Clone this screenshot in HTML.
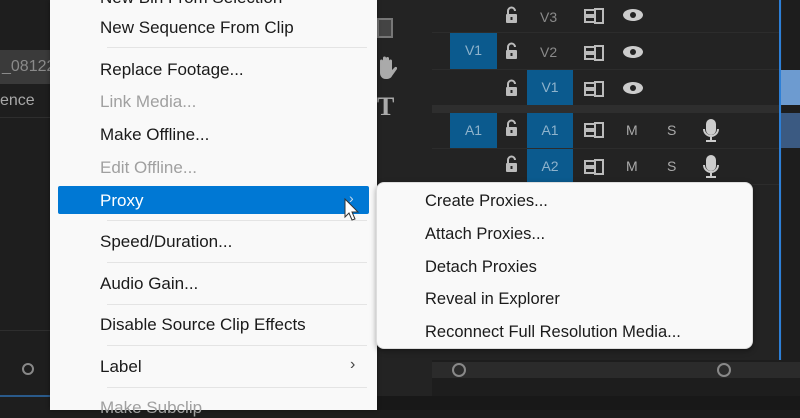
<!DOCTYPE html>
<html><head><style>
*{margin:0;padding:0;box-sizing:border-box}
body{width:800px;height:410px;overflow:hidden;background:#1d1d1d;font-family:"Liberation Sans",sans-serif;position:relative}
.a{position:absolute}
.menu{background:#f9f9f9}
.mi{position:absolute;left:100px;font-size:17px;color:#1a1a1a;white-space:nowrap;line-height:20px}
.dis{color:#a0a0a0}
.sep{position:absolute;left:107px;width:260px;height:1px;background:#e4e4e4}
.si{position:absolute;left:425px;font-size:16.5px;color:#1a1a1a;line-height:20px;white-space:nowrap}
.blue{background:#0b5a8e;color:#8fb3cc;font-size:14px;text-align:center;line-height:35px}
.lbl{color:#8a8a8a;font-size:14px}
</style></head><body>
<div class="a" style="left:0;top:0;width:50px;height:410px;background:#1e1e1e"></div>
<div class="a" style="left:0;top:50px;width:50px;height:34px;background:#3a3a3a"></div>
<div class="a" style="left:2px;top:58px;color:#8a8a8a;font-size:16px">_08122</div>
<div class="a" style="left:0;top:92px;color:#a8a8a8;font-size:16px">ence</div>
<div class="a" style="left:0;top:117px;width:50px;height:1px;background:#2e2e2e"></div>
<div class="a" style="left:0;top:330px;width:50px;height:1px;background:#2e2e2e"></div>
<div class="a" style="left:22px;top:363px;width:12px;height:12px;border:2.5px solid #888;border-radius:50%"></div>
<div class="a" style="left:0;top:395px;width:50px;height:2px;background:#2a5a8a"></div>
<div class="a" style="left:377px;top:0;width:55px;height:410px;background:#232323"></div>
<div class="a" style="left:377px;top:18px;width:16px;height:20px;border:2px solid #777;background:#444"></div>
<svg class="a" style="left:377px;top:56px" width="20" height="24" fill="#aaa"><path d="M3 12V5a1.5 1.5 0 0 1 3 0v6V2a1.5 1.5 0 0 1 3 0v9V2.5a1.5 1.5 0 0 1 3 0V11V5a1.5 1.5 0 0 1 3 0v9l3-3a1.5 1.5 0 0 1 2 2l-5 7c-1 2-3 3-6 3-4 0-6-3-6-6z"/></svg>
<div class="a" style="left:377px;top:92px;color:#aaa;font-size:26px;font-weight:bold;font-family:'Liberation Serif'">T</div>
<div class="a" style="left:432px;top:0;width:350px;height:360px;background:#232323"></div>
<div class="a" style="left:432px;top:105px;width:348px;height:8px;background:#2e2e2e"></div>
<div class="a" style="left:432px;top:32px;width:348px;height:1px;background:#2c2c2c"></div>
<div class="a" style="left:432px;top:69px;width:348px;height:1px;background:#2c2c2c"></div>
<div class="a" style="left:432px;top:148px;width:348px;height:1px;background:#2c2c2c"></div>
<div class="a" style="left:432px;top:184px;width:348px;height:1px;background:#2c2c2c"></div>
<div class="a blue" style="left:450px;top:33px;width:47px;height:36px">V1</div>
<div class="a blue" style="left:527px;top:70px;width:46px;height:35px">V1</div>
<div class="a blue" style="left:450px;top:113px;width:47px;height:35px">A1</div>
<div class="a blue" style="left:527px;top:113px;width:46px;height:35px">A1</div>
<div class="a blue" style="left:527px;top:149px;width:46px;height:34px">A2</div>
<div class="a lbl" style="left:540px;top:9px">V3</div>
<div class="a lbl" style="left:540px;top:44px">V2</div>
<svg class="a" style="left:504px;top:0" width="20" height="185">
<defs><g id="lk"><path d="M4 8V5a3.5 3.5 0 0 1 7 0" fill="none" stroke="#bbb" stroke-width="2"/><rect x="2" y="8" width="11" height="9" rx="1" fill="#bbb"/><rect x="6.5" y="11" width="2" height="3" fill="#232323"/></g></defs>
<use href="#lk" x="0" y="6"/><use href="#lk" x="0" y="42"/><use href="#lk" x="0" y="79"/><use href="#lk" x="0" y="119"/><use href="#lk" x="0" y="155"/>
</svg>
<svg class="a" style="left:580px;top:0" width="60" height="185" fill="none" stroke="#bbb" stroke-width="2">
<g><rect x="5" y="10" width="10" height="5"/><rect x="5" y="17" width="10" height="5"/><rect x="15" y="9" width="8" height="14"/></g>
<g transform="translate(0,37)"><rect x="5" y="10" width="10" height="5"/><rect x="5" y="17" width="10" height="5"/><rect x="15" y="9" width="8" height="14"/></g>
<g transform="translate(0,73)"><rect x="5" y="10" width="10" height="5"/><rect x="5" y="17" width="10" height="5"/><rect x="15" y="9" width="8" height="14"/></g>
<g transform="translate(0,114)"><rect x="5" y="10" width="10" height="5"/><rect x="5" y="17" width="10" height="5"/><rect x="15" y="9" width="8" height="14"/></g>
<g transform="translate(0,151)"><rect x="5" y="10" width="10" height="5"/><rect x="5" y="17" width="10" height="5"/><rect x="15" y="9" width="8" height="14"/></g>
</svg>
<svg class="a" style="left:620px;top:0" width="30" height="110" fill="#ccc">
<g><ellipse cx="13" cy="15" rx="10" ry="6"/><circle cx="13" cy="15" r="3" fill="#232323"/></g>
<g transform="translate(0,37)"><ellipse cx="13" cy="15" rx="10" ry="6"/><circle cx="13" cy="15" r="3" fill="#232323"/></g>
<g transform="translate(0,73)"><ellipse cx="13" cy="15" rx="10" ry="6"/><circle cx="13" cy="15" r="3" fill="#232323"/></g>
</svg>
<div class="a lbl" style="left:626px;top:122px;color:#aaa">M</div>
<div class="a lbl" style="left:626px;top:158px;color:#aaa">M</div>
<div class="a lbl" style="left:667px;top:122px;color:#aaa">S</div>
<div class="a lbl" style="left:667px;top:158px;color:#aaa">S</div>
<svg class="a" style="left:700px;top:118px" width="24" height="66" fill="none" stroke="#ccc" stroke-width="2">
<rect x="7" y="2" width="8" height="14" rx="4" fill="#ccc"/><path d="M4 11a7 7 0 0 0 14 0M11 18v4M6 23h10"/>
<g transform="translate(0,36)"><rect x="7" y="2" width="8" height="14" rx="4" fill="#ccc"/><path d="M4 11a7 7 0 0 0 14 0M11 18v4M6 23h10"/></g>
</svg>
<div class="a" style="left:779px;top:0;width:2px;height:360px;background:#2d7fd6"></div>
<div class="a" style="left:781px;top:70px;width:19px;height:35px;background:#6d9bd0"></div>
<div class="a" style="left:781px;top:113px;width:19px;height:35px;background:#3b5a82"></div>
<div class="a" style="left:432px;top:362px;width:368px;height:16px;background:#2b2b2b"></div>
<div class="a" style="left:452px;top:363px;width:14px;height:14px;border:2.5px solid #888;border-radius:50%"></div>
<div class="a" style="left:717px;top:363px;width:14px;height:14px;border:2.5px solid #888;border-radius:50%"></div>
<div class="a" style="left:377px;top:396px;width:423px;height:14px;background:#181818"></div>
<div class="a menu" style="left:50px;top:0;width:327px;height:410px;box-shadow:0 0 4px rgba(0,0,0,.4)"></div>
<div class="a" style="left:58px;top:186px;width:311px;height:28px;background:#0078d4;border-radius:2px"></div>
<div class="mi" style="top:-12px">New Bin From Selection</div>
<div class="mi" style="top:18px">New Sequence From Clip</div>
<div class="sep" style="top:47px"></div>
<div class="mi" style="top:60px">Replace Footage...</div>
<div class="mi dis" style="top:92px">Link Media...</div>
<div class="mi" style="top:125px">Make Offline...</div>
<div class="mi dis" style="top:158px">Edit Offline...</div>
<div class="mi" style="top:191px;color:#fff">Proxy</div>
<div class="a" style="left:349px;top:190px;color:#cde;font-size:14px">›</div>
<div class="sep" style="top:220px"></div>
<div class="mi" style="top:232px">Speed/Duration...</div>
<div class="sep" style="top:262px"></div>
<div class="mi" style="top:274px">Audio Gain...</div>
<div class="sep" style="top:304px"></div>
<div class="mi" style="top:315px">Disable Source Clip Effects</div>
<div class="sep" style="top:345px"></div>
<div class="mi" style="top:357px">Label</div>
<div class="a" style="left:350px;top:356px;color:#444;font-size:16px">›</div>
<div class="sep" style="top:387px"></div>
<div class="mi dis" style="top:398px">Make Subclip</div>
<svg class="a" style="left:344px;top:198px" width="16" height="26"><path d="M1 1v18l4-4 3 7 3-1-3-7h6z" fill="#fff" stroke="#333" stroke-width="1"/></svg>
<div class="a menu" style="left:376px;top:182px;width:377px;height:167px;border-radius:8px;border:1px solid #ddd;box-shadow:0 2px 6px rgba(0,0,0,.35)"></div>
<div class="si" style="top:191px">Create Proxies...</div>
<div class="si" style="top:224px">Attach Proxies...</div>
<div class="si" style="top:257px">Detach Proxies</div>
<div class="si" style="top:289px">Reveal in Explorer</div>
<div class="si" style="top:322px">Reconnect Full Resolution Media...</div>
</body></html>
